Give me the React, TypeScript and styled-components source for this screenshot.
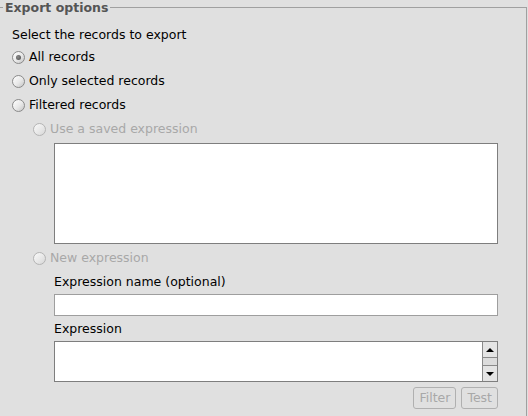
import React from "react";
import styled, { createGlobalStyle, css } from "styled-components";

const Global = createGlobalStyle`
  html, body { margin: 0; padding: 0; background: #e0e0e0; }
  body {
    font-family: "DejaVu Sans", "Liberation Sans", sans-serif;
    font-size: 12.5px;
    color: #000;
    width: 528px;
    height: 416px;
    overflow: hidden;
  }
`;

const Fieldset = styled.fieldset`
  box-sizing: border-box;
  width: 527px;
  min-height: 430px;
  margin: 0;
  padding: 0;
  border: 1px solid #a0a0a0;
  border-left: none;
  border-bottom: none;
`;

const Legend = styled.legend`
  margin-left: 3px;
  padding: 0 2px;
  font-weight: bold;
  line-height: 15px;
  color: #555555;
`;

const Content = styled.div`
  padding: 12px 28px 0 12px;
  display: flex;
  flex-direction: column;
`;

const Heading = styled.div`
  line-height: 16px;
  margin-bottom: 2px;
`;

const Row = styled.label<{ $disabled?: boolean }>`
  display: flex;
  align-items: center;
  gap: 4px;
  height: 24px;
  line-height: 16px;
  color: ${(p) => (p.$disabled ? "#a8a8a8" : "#000")};
`;

const Circle = styled.span<{ $checked?: boolean; $disabled?: boolean }>`
  box-sizing: border-box;
  width: 13px;
  height: 13px;
  border-radius: 50%;
  flex: none;
  display: flex;
  align-items: center;
  justify-content: center;
  border: 1px solid ${(p) => (p.$disabled ? "#b4b4b4" : "#8a8a8a")};
  background: ${(p) =>
    p.$disabled
      ? "linear-gradient(135deg, #fafafa 0%, #e6e6e6 60%, #d6d6d6 100%)"
      : "linear-gradient(135deg, #ffffff 0%, #e8e8e8 55%, #c4c4c4 100%)"};
  ${(p) =>
    p.$checked &&
    css`
      &::after {
        content: "";
        width: 5px;
        height: 5px;
        border-radius: 50%;
        background: radial-gradient(circle at 40% 40%, #8a8a8a, #4a4a4a);
      }
    `}
`;

const Indent = styled.div<{ $top?: number }>`
  display: flex;
  flex-direction: column;
  padding-left: 21px;
  margin-top: ${(p) => p.$top ?? 0}px;
`;

const SavedList = styled.div`
  box-sizing: border-box;
  height: 101px;
  margin-top: 2px;
  margin-bottom: 2px;
  background: #fff;
  border: 1px solid #7e7e7e;
`;

const FieldLabel = styled.div<{ $top: number }>`
  line-height: 16px;
  margin-top: ${(p) => p.$top}px;
`;

const Input = styled.div`
  box-sizing: border-box;
  height: 22px;
  margin-top: 4px;
  background: #fff;
  border: 1px solid #9e9e9e;
`;

const ExprArea = styled.div`
  box-sizing: border-box;
  height: 41px;
  margin-top: 4px;
  background: #fff;
  border: 1px solid #7e7e7e;
  display: flex;
`;

const ExprText = styled.div`
  flex: 1;
`;

const Scrollbar = styled.div`
  width: 14px;
  display: flex;
  flex-direction: column;
  border-left: 1px solid #8a8a8a;
  background: #e0e0e0;
`;

const ArrowButton = styled.div<{ $down?: boolean }>`
  box-sizing: border-box;
  height: 16px;
  display: flex;
  align-items: center;
  justify-content: center;
  background: #e4e4e4;
  ${(p) =>
    p.$down
      ? css`border-top: 1px solid #8a8a8a;`
      : css`border-bottom: 1px solid #8a8a8a;`}
  &::after {
    content: "";
    width: 0;
    height: 0;
    border-left: 4px solid transparent;
    border-right: 4px solid transparent;
    ${(p) =>
      p.$down
        ? css`border-top: 4px solid #000;`
        : css`border-bottom: 4px solid #000;`}
  }
`;

const Track = styled.div`
  flex: 1;
  background: #dcdcdc;
`;

const Buttons = styled.div`
  display: flex;
  justify-content: flex-end;
  gap: 5px;
  margin-top: 5px;
`;

const Button = styled.button`
  box-sizing: border-box;
  height: 22px;
  padding: 0 5px;
  margin: 0;
  font: inherit;
  line-height: 16px;
  color: #a8a8a8;
  background: transparent;
  border: 1px solid #b0b0b0;
  border-radius: 3px;
`;

function Radio({
  label,
  checked,
  disabled,
}: {
  label: string;
  checked?: boolean;
  disabled?: boolean;
}) {
  return (
    <Row $disabled={disabled}>
      <Circle $checked={checked} $disabled={disabled} />
      <span>{label}</span>
    </Row>
  );
}

export default function App() {
  return (
    <>
      <Global />
      <Fieldset>
        <Legend>Export options</Legend>
        <Content>
          <Heading>Select the records to export</Heading>
          <Radio label="All records" checked />
          <Radio label="Only selected records" />
          <Radio label="Filtered records" />
          <Indent>
            <Radio label="Use a saved expression" disabled />
            <Indent>
              <SavedList />
            </Indent>
            <Radio label="New expression" disabled />
            <Indent>
              <FieldLabel $top={4}>Expression name (optional)</FieldLabel>
              <Input />
              <FieldLabel $top={5}>Expression</FieldLabel>
              <ExprArea>
                <ExprText />
                <Scrollbar>
                  <ArrowButton />
                  <Track />
                  <ArrowButton $down />
                </Scrollbar>
              </ExprArea>
              <Buttons>
                <Button disabled>Filter</Button>
                <Button disabled>Test</Button>
              </Buttons>
            </Indent>
          </Indent>
        </Content>
      </Fieldset>
    </>
  );
}
